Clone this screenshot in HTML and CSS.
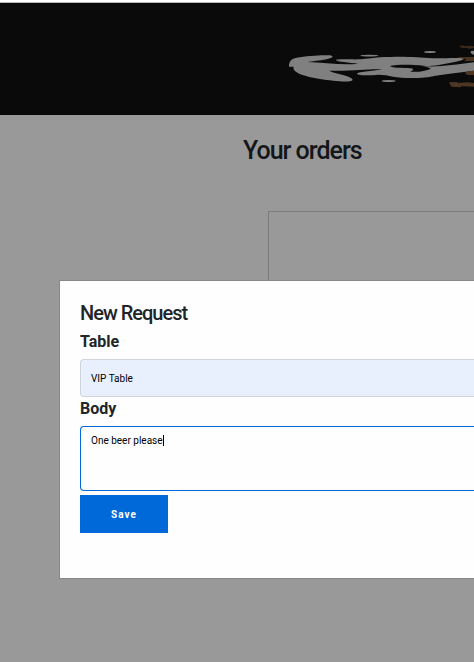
FILE: index.html
```html
<!DOCTYPE html>
<html lang="en">
<head>
<meta charset="utf-8">
<title>Your orders</title>
<link rel="stylesheet" href="styles.css">
</head>
<body>
<div class="page">
  <header class="banner">
    <svg class="logo" width="194" height="60" viewBox="0 0 582 180" aria-hidden="true">
      <g fill="#808080">
        <path d="M27 95C27 80 32 71 50 68C80 63 125 59 150 61C166 64 155 70 140 73C118 77 95 79 82 81C130 83 190 91 234 86C210 83 170 80 167 75C175 71 210 74 242 73C285 67 310 65 370 65C410 66 435 69 470 70C500 70 530 68 551 70C556 76 520 82 488 88C465 93 450 94 430 92C395 88 350 88 329 93C345 102 380 96 399 101C402 106 390 108 392 110C415 112 437 108 453 101C445 97 437 95 427 93C475 97 520 90 582 82V107C540 111 500 118 466 122C435 131 370 131 340 125C325 121 310 119 295 119C270 122 235 122 231 116C234 110 290 108 307 103C255 102 215 109 147 107C165 117 217 122 218 135C211 144 160 138 120 132C75 124 35 113 41 95Z"/>
        <ellipse cx="268" cy="62" rx="27" ry="2.5"/>
        <ellipse cx="450" cy="51" rx="18" ry="3"/>
        <ellipse cx="326" cy="138" rx="21" ry="3"/>
        <path d="M571 51Q575 46 582 48V59Q574 59 571 51Z"/>
      </g>
      <g fill="#4c3521">
        <path d="M537 34L548 31L554 34L572 32L582 34V39L566 41L560 38L548 40Z" opacity=".75"/>
        <path d="M530 67L582 66V78L551 79L560 73Z"/>
        <path d="M554 113L568 108L582 107V120H562Z"/>
        <path d="M507 142L530 141L535 144L560 142L582 144V155L545 154L540 157L514 155Z"/>
      </g>
    </svg>
  </header>
  <main class="content">
    <h2 class="heading">Your orders</h2>
    <section class="order"></section>
  </main>
</div>
<form class="modal">
  <h3 class="title">New Request</h3>
  <label class="label">Table</label>
  <div class="field autofilled">VIP Table</div>
  <label class="label body-label">Body</label>
  <div class="field body-field">One beer please<span class="caret"></span></div>
  <button class="save" type="button">Save</button>
</form>
</body>
</html>
```
FILE: styles.css
```css
* { box-sizing: border-box; }
html, body { height: 100%; }
body {
  margin: 0;
  overflow: hidden;
  font-family: Roboto, "Liberation Sans", sans-serif;
  color: #212529;
}
.page {
  height: 662px;
  background: #999;
  border-top: 2px solid #fff;
  box-shadow: inset 0 1px #bbb;
}
.banner {
  height: 112px;
  margin-top: 1px;
  padding: 32px 0 0 280px;
  background: #0a0a0a;
}
.logo { display: block; }
.content { padding: 21px 0 0 243px; }
.heading {
  margin: 0;
  font-size: 25px;
  line-height: 30px;
  font-weight: 500;
  letter-spacing: -1px;
  color: #14171a;
  white-space: nowrap;
}
.order {
  margin: 45px 0 0 25px;
  height: 200px;
  border: 1px solid #7c7c7c;
  border-right: 0;
}
.modal {
  position: absolute;
  left: 59px;
  right: 0;
  top: 280px;
  height: 299px;
  padding: 20px 0 20px 20px;
  background: #fefefe;
  border: 1px solid #888;
  border-right: 0;
}
.title {
  margin: 0;
  font-size: 20px;
  line-height: 24px;
  font-weight: 500;
  letter-spacing: -1px;
}
.label {
  display: block;
  height: 24px;
  margin: 5px 0;
  font-size: 16px;
  line-height: 24px;
  font-weight: 700;
}
.body-label { margin-top: 0; }
.field {
  height: 38px;
  padding: 10px 10px 8px;
  border: 1px solid #ced4da;
  border-right: 0;
  border-radius: 4px 0 0 4px;
  font-size: 10px;
  line-height: 18px;
  color: #000;
  background: #fefefe;
}
.autofilled { background: #e8f0fe; }
.body-field {
  height: 65px;
  padding-top: 5px;
  border-color: #0069d9;
}
.caret {
  display: inline-block;
  width: 1px;
  height: 11px;
  vertical-align: -2px;
  background: #000;
}
.save {
  display: block;
  width: 88px;
  height: 38px;
  margin-top: 4px;
  padding: 1px 0 0;
  border: 0;
  background: #0069d9;
  color: #fff;
  font: 700 10px/37px Roboto, sans-serif;
  letter-spacing: 1px;
}
```
